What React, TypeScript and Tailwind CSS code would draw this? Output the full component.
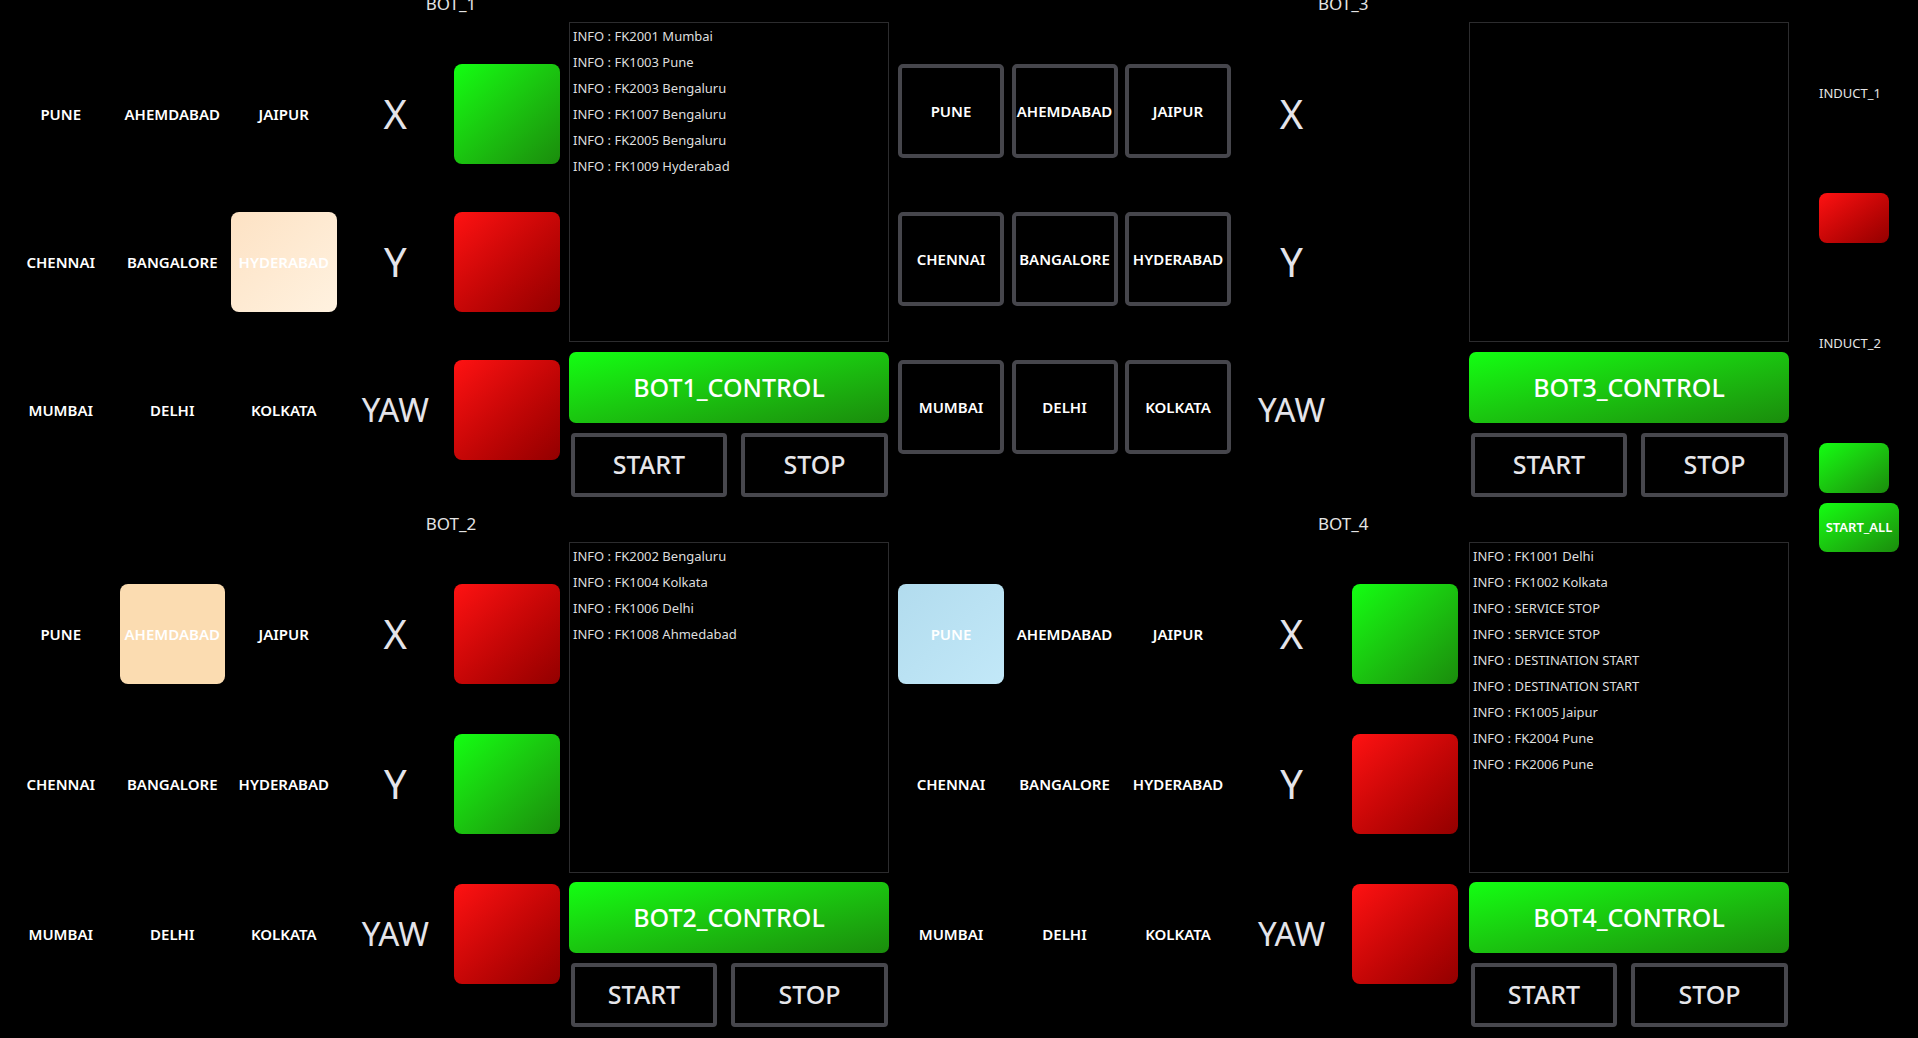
import React from 'react'

const CITIES = [
  ['PUNE', 'AHEMDABAD', 'JAIPUR'],
  ['CHENNAI', 'BANGALORE', 'HYDERABAD'],
  ['MUMBAI', 'DELHI', 'KOLKATA'],
]
const AXES = ['X', 'Y', 'YAW']

const GREEN = 'bg-gradient-to-br from-[#12ff12] to-[#1a8c0c]'
const RED = 'bg-gradient-to-br from-[#ff1212] to-[#930000]'

type Bot = {
  name: string
  side: 'left' | 'right'
  row: 'top' | 'bottom'
  highlight?: { city: string; cls: string }
  bordered?: boolean
  lights?: ('g' | 'r')[]
  logs: string[]
}

const BOTS: Bot[] = [
  {
    name: 'BOT_1', side: 'left', row: 'top',
    highlight: { city: 'HYDERABAD', cls: 'bg-gradient-to-br from-[#fde2c4] to-[#fff2e0]' },
    lights: ['g', 'r', 'r'],
    logs: ['FK2001 Mumbai', 'FK1003 Pune', 'FK2003 Bengaluru', 'FK1007 Bengaluru', 'FK2005 Bengaluru', 'FK1009 Hyderabad'],
  },
  {
    name: 'BOT_2', side: 'left', row: 'bottom',
    highlight: { city: 'AHEMDABAD', cls: 'bg-[#fbdcb1]' },
    lights: ['r', 'g', 'r'],
    logs: ['FK2002 Bengaluru', 'FK1004 Kolkata', 'FK1006 Delhi', 'FK1008 Ahmedabad'],
  },
  { name: 'BOT_3', side: 'right', row: 'top', bordered: true, logs: [] },
  {
    name: 'BOT_4', side: 'right', row: 'bottom',
    highlight: { city: 'PUNE', cls: 'bg-gradient-to-br from-[#b2dcee] to-[#c2e8f8]' },
    lights: ['g', 'r', 'r'],
    logs: ['FK1001 Delhi', 'FK1002 Kolkata', 'SERVICE STOP', 'SERVICE STOP', 'DESTINATION START', 'DESTINATION START', 'FK1005 Jaipur', 'FK2004 Pune', 'FK2006 Pune'],
  },
]

function BotPanel({ bot }: { bot: Bot }) {
  const left = bot.side === 'left'
  const top = bot.row === 'top'
  const grid = left
    ? 'grid grid-cols-[105.5px_105.5px_105.5px_105.5px_105.5px] gap-x-[6px]'
    : 'grid grid-cols-[106px_106px_106px_106px_106px] gap-x-[7.5px]'
  const num = bot.name.slice(-1)

  return (
    <div className="flex h-[520px]">
      <div className={left ? 'flex flex-col pl-[8px]' : 'flex flex-col'}>
        <div className={grid}>
          <div className="col-span-3" />
          <div className={'col-span-2 h-[24px] text-center text-[17px] leading-[24px] text-[#e4e4e4] ' + (left ? '' : 'pr-[10px]')}>
            {bot.name}
          </div>
        </div>
        <div className={grid + ' mt-[48px] auto-rows-[100px] ' + (top ? 'gap-y-[48px]' : 'gap-y-[50px]')}>
          {CITIES.map((row, r) => (
            <React.Fragment key={r}>
              {row.map((city) => {
                const hl = bot.highlight?.city === city
                if (bot.bordered) {
                  return (
                    <div key={city} className="flex h-[94px] items-center justify-center rounded-[5px] border-4 border-[#46464c] text-[15px] font-semibold text-white">
                      {city}
                    </div>
                  )
                }
                return (
                  <div
                    key={city}
                    className={'flex items-center justify-center rounded-[8px] text-[15px] font-semibold text-white ' + (hl ? bot.highlight!.cls : '')}
                  >
                    {city}
                  </div>
                )
              })}
              <div className={'flex items-center justify-center text-[#e4e4ea] ' + (r === 2 ? 'text-[33px]' : 'text-[40px]')}>
                {AXES[r]}
              </div>
              {bot.lights ? (
                <div className={'rounded-[8px] ' + (bot.lights[r] === 'g' ? GREEN : RED)} />
              ) : (
                <div />
              )}
            </React.Fragment>
          ))}
        </div>
      </div>

      <div className={(left ? 'ml-[9.5px]' : 'ml-[11px]') + ' mt-[30px] flex w-[320px] flex-col'}>
        <div className={(top ? 'h-[320px]' : 'h-[331px]') + ' border border-[#2c2c2e] pl-[3px]'}>
          {bot.logs.map((l, i) => (
            <div key={i} className="text-[13px] leading-[26px] text-[#dedede]">INFO : {l}</div>
          ))}
        </div>
        <button className={(top ? 'mt-[10px]' : 'mt-[9px]') + ' h-[71px] rounded-[7px] text-[25px] font-medium text-white ' + GREEN}>
          BOT{num}_CONTROL
        </button>
        <div className="mt-[10px] flex justify-between pl-[2px] pr-[1px]">
          <button className={(top ? 'w-[156px]' : 'w-[146px]') + ' h-[64px] rounded-[4px] border-4 border-[#47474d] text-[25px] font-medium text-[#e6e6ea]'}>
            START
          </button>
          <button className={(top ? 'w-[147px]' : 'w-[157px]') + ' h-[64px] rounded-[4px] border-4 border-[#47474d] text-[25px] font-medium text-[#e6e6ea]'}>
            STOP
          </button>
        </div>
      </div>
    </div>
  )
}

export default function App() {
  return (
    <div className="h-screen w-full overflow-hidden bg-black font-['Noto_Sans',sans-serif]">
      <div className="-mt-[8px] flex">
        <div className="flex w-[898px] flex-col">
          <BotPanel bot={BOTS[0]} />
          <BotPanel bot={BOTS[1]} />
        </div>
        <div className="flex w-[891px] flex-col">
          <BotPanel bot={BOTS[2]} />
          <BotPanel bot={BOTS[3]} />
        </div>
        <div className="ml-[30px] flex w-[80px] flex-col pt-[92px]">
          <div className="h-[18px] text-[13px] leading-[18px] text-[#e4e4e4]">INDUCT_1</div>
          <div className={'mt-[91px] h-[50px] w-[70px] rounded-[8px] ' + RED} />
          <div className="mt-[91px] h-[18px] text-[13px] leading-[18px] text-[#e4e4e4]">INDUCT_2</div>
          <div className={'mt-[91px] h-[50px] w-[70px] rounded-[8px] ' + GREEN} />
          <button className={'mt-[10px] h-[49px] w-[80px] rounded-[8px] text-[13px] font-semibold text-white ' + GREEN}>
            START_ALL
          </button>
        </div>
      </div>
    </div>
  )
}
